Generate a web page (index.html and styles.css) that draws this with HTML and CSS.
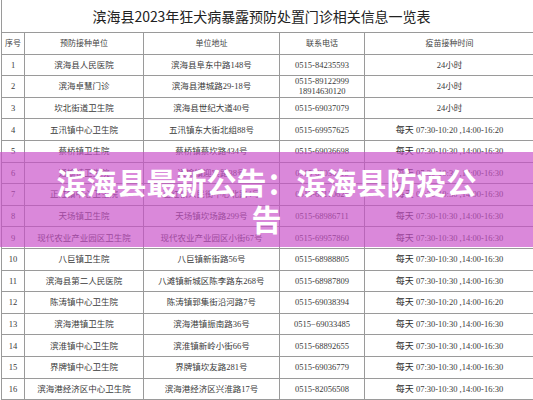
FILE: index.html
```html
<!DOCTYPE html>
<html lang="zh-CN">
<head>
<meta charset="utf-8">
<title>滨海县狂犬病暴露预防处置门诊</title>
<link rel="stylesheet" href="styles.css">
</head>
<body>
<div class="page">
  <div class="sheet">
    <h1 class="title">滨海县2023年狂犬病暴露预防处置门诊相关信息一览表</h1>
    <table class="grid">
      <colgroup>
        <col class="c1"><col class="c2"><col class="c3"><col class="c4"><col class="c5">
      </colgroup>
      <thead>
        <tr><th>序号</th><th>预防接种单位</th><th>单位地址</th><th>联系电话</th><th>疫苗接种时间</th></tr>
      </thead>
      <tbody>
        <tr><td>1</td><td>滨海县人民医院</td><td>滨海县阜东中路148号</td><td>0515-84235593</td><td>24小时</td></tr>
        <tr><td>2</td><td>滨海卓慧门诊</td><td>滨海县港城路29-18号</td><td>0515-89122999<br>18914630120</td><td>24小时</td></tr>
        <tr><td>3</td><td>坎北街道卫生院</td><td>滨海县世纪大道40号</td><td>0515-69037079</td><td>24小时</td></tr>
        <tr><td>4</td><td>五汛镇中心卫生院</td><td>五汛镇东大街北组88号</td><td>0515-69957625</td><td><span class="cj">每天</span> 07:30-10:20 ,14:00-16:20</td></tr>
        <tr><td>5</td><td>蔡桥镇卫生院</td><td>蔡桥镇蔡坎路434号</td><td>0515-69036698</td><td><span class="cj">每天</span> 07:30-10:30 ,14:00-16:30</td></tr>
        <tr><td>6</td><td>通榆镇卫生院</td><td>通榆镇迎宾路38号</td><td>0515-69036118</td><td><span class="cj">每天</span> 07:30-10:30 ,14:00-16:30</td></tr>
        <tr><td>7</td><td>正红镇中心卫生院</td><td>正红镇人民街中心北路4号</td><td>0515-68110625</td><td><span class="cj">每天</span> 07:30-10:30 ,14:00-16:30</td></tr>
        <tr><td>8</td><td>天场镇卫生院</td><td>天场镇坎场路299号</td><td>0515-68986711</td><td><span class="cj">每天</span> 07:30-10:30 ,14:00-16:30</td></tr>
        <tr><td>9</td><td>现代农业产业园区卫生院</td><td>现代农业产业园区小街67号</td><td>0515-69957860</td><td><span class="cj">每天</span> 07:30-10:30 ,14:00-16:30</td></tr>
        <tr><td>10</td><td>八巨镇卫生院</td><td>八巨镇新街路56号</td><td>0515-68988805</td><td><span class="cj">每天</span> 07:30-10:30 ,14:00-16:30</td></tr>
        <tr><td>11</td><td>滨海县第二人民医院</td><td>八滩镇新城区陈李路东268号</td><td>0515-68987809</td><td><span class="cj">每天</span> 07:30-10:30 ,14:00-16:30</td></tr>
        <tr><td>12</td><td>陈涛镇中心卫生院</td><td>陈涛镇郭集街沿河路7号</td><td>0515-69038394</td><td><span class="cj">每天</span> 07:30-10:20 ,14:00-16:20</td></tr>
        <tr><td>13</td><td>滨海港镇卫生院</td><td>滨海港镇振南路36号</td><td>0515−69033485</td><td><span class="cj">每天</span> 07:30-10:30 ,14:00-16:30</td></tr>
        <tr><td>14</td><td>滨淮镇中心卫生院</td><td>滨淮镇新岭小街66号</td><td>0515-68892655</td><td><span class="cj">每天</span> 07:30-10:30 ,14:00-16:30</td></tr>
        <tr><td>15</td><td>界牌镇中心卫生院</td><td>界牌镇坎友路281号</td><td>0515-69036779</td><td><span class="cj">每天</span> 07:30-10:30 ,14:00-16:30</td></tr>
        <tr><td>16</td><td>滨海港经济区中心卫生院</td><td>滨海港经济区兴淮路17号</td><td>0515-82056508</td><td><span class="cj">每天</span> 07:30-10:30 ,14:00-16:30</td></tr>
      </tbody>
    </table>
  </div>
  <div class="banner">
    <p class="banner-text">滨海县最新公告：滨海县防疫公告</p>
  </div>
</div>
</body>
</html>
```

FILE: styles.css
```css
html, body {
  margin: 0;
  padding: 0;
  background: #ffffff;
}

.page {
  position: relative;
  width: 533px;
  height: 400px;
  overflow: hidden;
}

.sheet {
  border-left: 1px solid #9a9a9a;
  margin-left: 1px;
}

.title {
  margin: 0;
  height: 32px;
  padding-right: 12px;
  display: flex;
  align-items: center;
  justify-content: center;
  font-family: "Noto Sans CJK SC", sans-serif;
  font-weight: 400;
  font-size: 14px;
  color: #222222;
  letter-spacing: -0.05px;
}

.grid {
  border-collapse: collapse;
  table-layout: fixed;
  width: 533px;
  margin-left: -1px;
}

.c1 { width: 23px; }
.c2 { width: 119px; }
.c3 { width: 136px; }
.c4 { width: 85px; }
.c5 { width: 170px; }

.grid th,
.grid td {
  border: 1px solid #9a9a9a;
  padding: 0;
  text-align: center;
  vertical-align: middle;
  color: #3a3a3a;
  line-height: 10px;
  white-space: nowrap;
  overflow: hidden;
}

.grid th {
  height: 20.6px;
  font-family: "Noto Sans CJK SC", sans-serif;
  font-weight: 400;
  font-size: 8px;
  color: #444444;
}

.grid td {
  height: 20.6px;
  font-family: "Liberation Serif", "Noto Sans CJK SC", serif;
  font-size: 8.5px;
}

.cj {
  font-family: "Noto Sans CJK SC", sans-serif;
  font-size: 9px;
  color: #2e2e2e;
}

.banner {
  position: absolute;
  left: 0;
  top: 152px;
  width: 533px;
  height: 95px;
  background: rgba(200, 80, 200, 0.68);
  display: flex;
  align-items: center;
  justify-content: center;
  padding: 0 50px;
  box-sizing: border-box;
}

.banner-text {
  margin: 0;
  font-family: "Noto Sans CJK SC", sans-serif;
  font-weight: 700;
  font-size: 30px;
  line-height: 37px;
  color: #ffffff;
  text-align: center;
}
```
